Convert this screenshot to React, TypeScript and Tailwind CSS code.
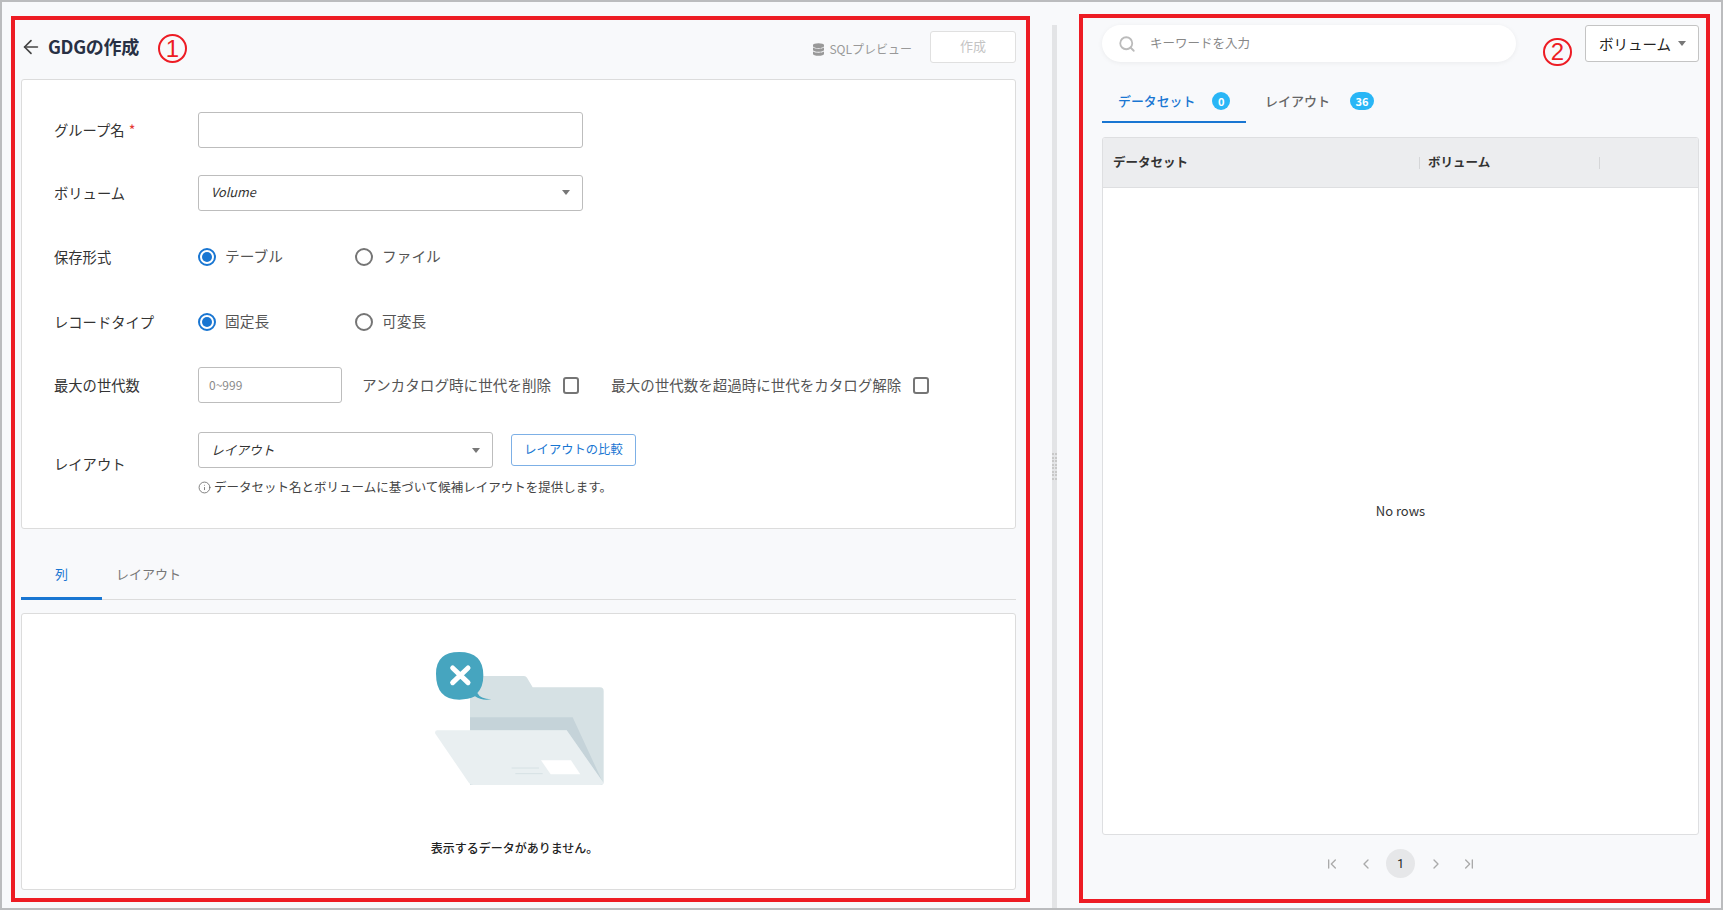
import { ArrowLeft, ChevronFirst, ChevronLast, ChevronLeft, ChevronRight, Info, Search } from "lucide-react";
import { FaDatabase } from "react-icons/fa";
import type { ReactNode } from "react";

function Caret() {
  return <span className="h-0 w-0 border-x-[4.5px] border-t-[5px] border-x-transparent border-t-[#777]" />;
}

function Row({ label, required, className, children }: { label: string; required?: boolean; className: string; children: ReactNode }) {
  return (
    <div className={`flex items-center ${className}`}>
      <div className="w-[176px] shrink-0 pl-[32px] text-[14.3px] leading-5 text-[#333]">
        {label}
        {required && <span className="ml-1 text-[#e53935]">*</span>}
      </div>
      {children}
    </div>
  );
}

function Radio({ label, checked, className }: { label: string; checked?: boolean; className: string }) {
  return (
    <div className={`flex items-center gap-[9px] ${className}`}>
      <span className={`flex h-[18px] w-[18px] items-center justify-center rounded-full border-2 ${checked ? "border-[#1976d2]" : "border-[#757575]"}`}>
        {checked && <span className="h-[10px] w-[10px] rounded-full bg-[#1976d2]" />}
      </span>
      <span className="-mt-[2px] text-[14.7px] leading-5 text-[#555]">{label}</span>
    </div>
  );
}

function Check() {
  return <span className="ml-[12px] block h-[17px] w-[16px] shrink-0 rounded-[3px] border-2 border-[#757575] bg-white" />;
}

function FolderArt() {
  return (
    <svg width="170" height="135" viewBox="105 62 510 405" className="ml-[2px]">
      <path d="M210 137H372q6 0 9 5L398 171H600q11 0 11 11V454q0 10-11 10H210Z" fill="#d6e1e4" />
      <path d="M210 261H518L608 455 500 300H210Z" fill="#c5d3d9" />
      <path d="M112 300H500L611 458q-3 6-11 6H220q-8 0-13-6L106 310q-3-10 6-10Z" fill="#e9eff1" />
      <path d="M423 390H513L541 432H452Z" fill="#fff" />
      <path d="M335 413H417M346 430H428" stroke="#d6e1e4" strokeWidth="3" />
      <path d="M108 130Q108 65 178 65 250 65 250 135 250 170 232 188 240 205 274 207 245 212 225 198 205 208 178 208 108 208 108 130Z" fill="#46a5bf" />
      <path d="M158 113 204 157M204 113 158 157" stroke="#fff" strokeWidth="15" strokeLinecap="round" />
    </svg>
  );
}

export default function App() {
  return (
    <div className="relative box-border flex h-[910px] w-[1723px] overflow-hidden border-2 border-[#bbbcbe] bg-[#f8f9fb] font-['Noto_Sans_CJK_JP','Noto_Sans',sans-serif]">
      {/* left pane */}
      <section className="ml-[19px] w-[995px] shrink-0 pt-[29px]">
        <header className="flex h-[32px] items-center">
          <ArrowLeft className="-ml-[1px] h-[22px] w-[22px] text-[#444]" strokeWidth={1.8} />
          <h1 className="-mt-[2px] ml-[6px] text-[18px] leading-6 font-bold tracking-[-0.3px] text-[#283044]">GDGの作成</h1>
          <div className="mt-[4px] ml-auto flex items-center gap-[5px] text-[12px] text-[#999]">
            <FaDatabase className="h-[13px] w-[11px] text-[#999]" />
            SQLプレビュー
          </div>
          <button className="ml-[18px] h-[32px] w-[86px] rounded-[3px] border border-[#e0e0e0] bg-white pb-[2px] text-[13px] text-[#c4c4c4]">作成</button>
        </header>

        <div className="mt-[16px] h-[450px] rounded-[3px] border border-[#dcdcdc] bg-white pt-[32px]">
          <Row label="グループ名" required className="h-[36px]">
            <div className="h-[36px] w-[385px] rounded-[3px] border border-[#bdbdbd] bg-white" />
          </Row>
          <Row label="ボリューム" className="mt-[27px] h-[36px]">
            <div className="flex h-[36px] w-[385px] items-center justify-between rounded-[3px] border border-[#bdbdbd] bg-white pr-[12px] pb-[2px] pl-[12px] text-[12.7px] italic text-[#333]">
              Volume
              <Caret />
            </div>
          </Row>
          <Row label="保存形式" className="mt-[28px] h-[36px]">
            <Radio label="テーブル" checked className="w-[157px]" />
            <Radio label="ファイル" className="" />
          </Row>
          <Row label="レコードタイプ" className="mt-[29px] h-[36px]">
            <Radio label="固定長" checked className="w-[157px]" />
            <Radio label="可変長" className="" />
          </Row>
          <Row label="最大の世代数" className="mt-[27px] h-[36px]">
            <div className="flex h-[36px] w-[144px] items-center rounded-[3px] border border-[#bdbdbd] bg-white pl-[10px] text-[12px] text-[#8a8a8a]">0~999</div>
            <span className="ml-[20px] text-[14.6px] leading-5 text-[#555]">アンカタログ時に世代を削除</span>
            <Check />
            <span className="ml-[32px] text-[14.5px] leading-5 text-[#555]">最大の世代数を超過時に世代をカタログ解除</span>
            <Check />
          </Row>
          <Row label="レイアウト" className="mt-[29px]">
            <div>
              <div className="flex items-center">
                <div className="flex h-[36px] w-[295px] items-center justify-between rounded-[3px] border border-[#bdbdbd] bg-white pr-[12px] pl-[12px] text-[12.7px] italic text-[#333]">
                  レイアウト
                  <Caret />
                </div>
                <button className="ml-[18px] h-[32px] w-[125px] rounded-[3px] border border-[#7db0e6] bg-white pb-[2px] text-[12.3px] text-[#1976d2]">レイアウトの比較</button>
              </div>
              <div className="mt-[10px] flex items-center gap-[3px] text-[12.5px] leading-[18px] text-[#444]">
                <Info className="h-[13px] w-[13px] text-[#666]" strokeWidth={1.5} />
                データセット名とボリュームに基づいて候補レイアウトを提供します。
              </div>
            </div>
          </Row>
        </div>

        <div className="mt-[25px] flex h-[46px] border-b border-[#dcdcdc]">
          <div className="flex h-[46px] w-[81px] items-center justify-center border-b-[3px] border-[#1976d2] pb-[4px] text-[13px] text-[#1976d2]">列</div>
          <div className="flex h-[46px] w-[93px] items-center justify-center pb-[7px] text-[13px] text-[#777]">レイアウト</div>
        </div>

        <div className="mt-[13px] flex h-[277px] flex-col items-center rounded-[3px] border border-[#dcdcdc] bg-white pt-[37px]">
          <FolderArt />
          <div className="mt-[53px] -ml-[8px] text-[12px] leading-[18px] font-medium text-[#222]">表示するデータがありません。</div>
        </div>
      </section>

      {/* splitter */}
      <div className="mt-[23px] ml-[36px] flex w-[5px] shrink-0 items-center justify-center bg-[#e3e4e6]">
        <div className="grid grid-cols-2 gap-[1.6px]">
          {Array.from({ length: 16 }).map((_, i) => (
            <span key={i} className="h-[2px] w-[2px] bg-[#c8c8c8]" />
          ))}
        </div>
      </div>

      {/* right pane */}
      <section className="ml-[45px] w-[597px] shrink-0 pt-[23px]">
        <div className="flex items-start justify-between">
          <div className="flex h-[37px] w-[414px] items-center rounded-full bg-white pl-[16px] shadow-[0_1px_5px_rgba(0,0,0,0.06)]">
            <Search className="h-[18px] w-[18px] text-[#bbb]" strokeWidth={2.4} />
            <span className="ml-[14px] text-[12.5px] text-[#888]">キーワードを入力</span>
          </div>
          <div className="flex h-[37px] w-[114px] items-center justify-between rounded-[3px] border border-[#c4c4c4] bg-white pr-[12px] pl-[13px] text-[14.5px] text-[#222]">
            ボリューム
            <Caret />
          </div>
        </div>

        <div className="mt-[15px] flex h-[46px]">
          <div className="flex h-[46px] w-[144px] items-center border-b-2 border-[#1976d2] pt-[4px] pl-[16px] text-[12.9px] font-medium text-[#1976d2]">
            データセット
            <span className="ml-[17px] flex h-[18px] w-[18px] items-center justify-center rounded-full bg-[#29b6f6] text-[11px] font-bold text-white">0</span>
          </div>
          <div className="flex h-[46px] items-center pt-[2px] pl-[19px] text-[13px] font-medium text-[#666]">
            レイアウト
            <span className="ml-[20px] flex h-[18px] w-[24px] items-center justify-center rounded-full bg-[#29b6f6] text-[11px] font-bold text-white">36</span>
          </div>
        </div>

        <div className="mt-[14px] flex h-[698px] flex-col overflow-hidden rounded-[3px] border border-[#dedfe1] bg-white">
          <div className="flex h-[50px] shrink-0 items-center border-b border-[#dedfe1] bg-[#ecedef] text-[12.5px] font-semibold text-[#333]">
            <div className="w-[316px] pl-[10px]">データセット</div>
            <span className="h-[12px] w-px bg-[#d5d6d8]" />
            <div className="w-[179px] pl-[8px]">ボリューム</div>
            <span className="h-[12px] w-px bg-[#d5d6d8]" />
          </div>
          <div className="flex flex-1 items-center justify-center text-[13px] text-[#333]">No rows</div>
        </div>

        <div className="mt-[14px] flex h-[29px] items-center text-[#aaa]">
          <ChevronFirst className="ml-[222px] h-[16px] w-[16px]" />
          <ChevronLeft className="ml-[18px] h-[16px] w-[16px]" />
          <span className="ml-[12px] flex h-[29px] w-[29px] items-center justify-center rounded-full bg-[#e6e7e9] font-['Roboto',sans-serif] text-[12px] text-[#222]">1</span>
          <ChevronRight className="ml-[13px] h-[16px] w-[16px]" />
          <ChevronLast className="ml-[17px] h-[16px] w-[16px]" />
        </div>
      </section>

      {/* red annotations */}
      <div className="pointer-events-none absolute top-[14px] left-[9px] h-[886px] w-[1019px] border-4 border-[#ed1c24]" />
      <div className="pointer-events-none absolute top-[12px] left-[1077px] h-[889px] w-[631px] border-4 border-[#ed1c24]" />
      <div className="pointer-events-none absolute top-[32px] left-[156px] flex h-[29px] w-[29px] items-center justify-center rounded-full border-2 border-[#ed1c24] font-['Liberation_Sans',sans-serif] text-[24px] text-[#ed1c24]">1</div>
      <div className="pointer-events-none absolute top-[36px] left-[1541px] flex h-[28px] w-[29px] items-center justify-center rounded-full border-2 border-[#ed1c24] font-['Liberation_Sans',sans-serif] text-[24px] text-[#ed1c24]">2</div>
    </div>
  );
}
